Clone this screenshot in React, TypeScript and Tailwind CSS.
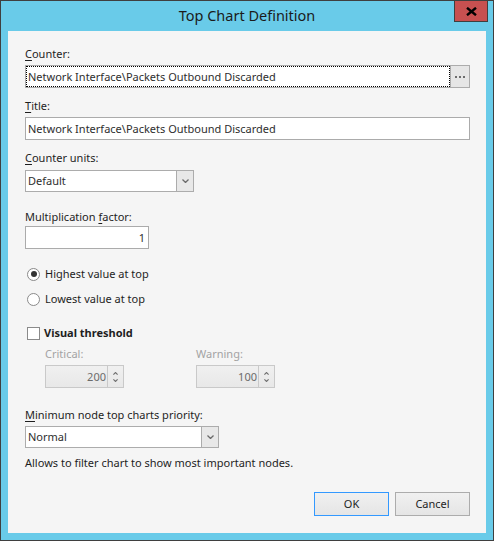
import React from "react";

function Chevron({ up = false }: { up?: boolean }) {
  return (
    <svg width="7" height="4" viewBox="0 0 7 4" className="block">
      <path
        d={up ? "M0.5 3.5 L3.5 0.5 L6.5 3.5" : "M0.5 0.5 L3.5 3.5 L6.5 0.5"}
        fill="none"
        stroke="#6a6a6a"
        strokeWidth="1.3"
      />
    </svg>
  );
}

function SelectBox({ value, width }: { value: string; width: string }) {
  return (
    <div className={`${width} h-[22px] flex border border-[#acacac] bg-white`}>
      <div className="flex-1 flex items-center pl-[2px] text-[#2e2e2e]">{value}</div>
      <div className="w-[17px] border-l border-[#acacac] bg-[#e8e8e8] flex items-center justify-center">
        <Chevron />
      </div>
    </div>
  );
}

function SpinBox({ value }: { value: string }) {
  return (
    <div className="w-[79px] h-[23px] flex border border-[#c9c9c9] bg-gradient-to-b from-[#f0f0f0] to-[#e8e8e8]">
      <div className="flex-1 flex items-center justify-end pr-[1px] text-[#6b6b6b]">{value}</div>
      <div className="w-[16px] border-l border-[#c9c9c9] flex flex-col items-center justify-center gap-[4px]">
        <svg width="5" height="3" viewBox="0 0 5 3" className="block">
          <path d="M0.4 2.6 L2.5 0.5 L4.6 2.6" fill="none" stroke="#6f6f6f" strokeWidth="1.1" />
        </svg>
        <svg width="5" height="3" viewBox="0 0 5 3" className="block">
          <path d="M0.4 0.4 L2.5 2.5 L4.6 0.4" fill="none" stroke="#6f6f6f" strokeWidth="1.1" />
        </svg>
      </div>
    </div>
  );
}

export default function App() {
  return (
    <div className="w-[494px] h-[541px] bg-[#69cbe9] border border-[#3f3f3f] flex flex-col relative font-['Noto_Sans',sans-serif] text-[#1e1e1e]">
      {/* Title bar */}
      <div className="h-[30px] flex items-center justify-center text-[14.5px] text-[#1b1b1b]">
        Top Chart Definition
      </div>
      <div className="absolute left-[453px] top-[-1px] w-[34px] h-[22px] bg-[#c75050] border border-[#3f3f3f] flex items-center justify-center">
        <svg width="11" height="9" viewBox="0 0 11 9" className="block">
          <path d="M1 0.8 L10 8.2 M10 0.8 L1 8.2" stroke="#000" strokeWidth="2.4" fill="none" />
        </svg>
      </div>

      {/* Content */}
      <div className="mx-[7px] h-[502px] bg-[#f5f5f5] pl-[17px] pr-[16px] pt-[15px] flex flex-col text-[11px] leading-[16px]">
        <div className="h-[16px]">
          <span className="underline underline-offset-2">C</span>ounter:
        </div>
        <div className="mt-[3px] h-[23px] flex">
          <div className="w-[426px] h-[23px] border border-[#ababab] bg-white p-0">
            <div className="h-full w-full border border-dotted border-[#000] flex items-center pl-[1px] text-[#2e2e2e]">
              Network Interface\Packets Outbound Discarded
            </div>
          </div>
          <div className="w-[19px] h-[23px] border border-[#acacac] border-l-0 bg-[#e6e6e6] flex items-center justify-center gap-[2px]">
            <div className="w-[2px] h-[2px] bg-[#6d6d6d]" />
            <div className="w-[2px] h-[2px] bg-[#6d6d6d]" />
            <div className="w-[2px] h-[2px] bg-[#6d6d6d]" />
          </div>
        </div>

        <div className="mt-[10px] h-[16px]">
          <span className="underline underline-offset-2">T</span>itle:
        </div>
        <div className="mt-[3px] h-[23px] border border-[#ababab] bg-white flex items-center pl-[2px] text-[#2e2e2e]">
          Network Interface\Packets Outbound Discarded
        </div>

        <div className="mt-[10px] h-[16px]">
          <span className="underline underline-offset-2">C</span>ounter units:
        </div>
        <div className="mt-[4px]">
          <SelectBox value="Default" width="w-[169px]" />
        </div>

        <div className="mt-[17px] h-[16px]">
          Multiplication <span className="underline underline-offset-2">f</span>actor:
        </div>
        <div className="mt-[1px] w-[124px] h-[23px] border border-[#ababab] bg-white flex items-center justify-end pr-[3px] text-[#2e2e2e]">
          1
        </div>

        <div className="mt-[17px] h-[16px] flex items-center gap-[5px] pl-[2px]">
          <div className="w-[13px] h-[13px] rounded-full border border-[#8a8a8a] bg-white flex items-center justify-center">
            <div className="w-[6px] h-[6px] rounded-full bg-[#333333]" />
          </div>
          <span>Highest value at top</span>
        </div>
        <div className="mt-[9px] h-[16px] flex items-center gap-[5px] pl-[2px]">
          <div className="w-[13px] h-[13px] rounded-full border border-[#8a8a8a] bg-white" />
          <span>Lowest value at top</span>
        </div>

        <div className="mt-[18px] h-[16px] flex items-center gap-[4px] pl-[2px]">
          <div className="w-[13px] h-[13px] border border-[#8a8a8a] bg-white" />
          <span className="font-bold">Visual threshold</span>
        </div>

        <div className="mt-[5px] pl-[20px] flex">
          <div className="w-[151px] flex flex-col">
            <div className="h-[16px] text-[#a3a3a3]">Critical:</div>
            <div className="mt-[3px]">
              <SpinBox value="200" />
            </div>
          </div>
          <div className="flex flex-col">
            <div className="h-[16px] text-[#a3a3a3]">Warning:</div>
            <div className="mt-[3px]">
              <SpinBox value="100" />
            </div>
          </div>
        </div>

        <div className="mt-[19px] h-[16px]">
          <span className="underline underline-offset-2">M</span>inimum node top charts priority:
        </div>
        <div className="mt-[3px]">
          <SelectBox value="Normal" width="w-[194px]" />
        </div>

        <div className="mt-[7px] h-[16px]">Allows to filter chart to show most important nodes.</div>

        <div className="mt-[21px] flex justify-end gap-[6px]">
          <div className="w-[75px] h-[24px] border border-[#3399ff] bg-gradient-to-b from-[#f0f0f0] to-[#e5e5e5] flex items-center justify-center">
            OK
          </div>
          <div className="w-[75px] h-[24px] border border-[#acacac] bg-gradient-to-b from-[#f0f0f0] to-[#e5e5e5] flex items-center justify-center">
            Cancel
          </div>
        </div>
      </div>
    </div>
  );
}
